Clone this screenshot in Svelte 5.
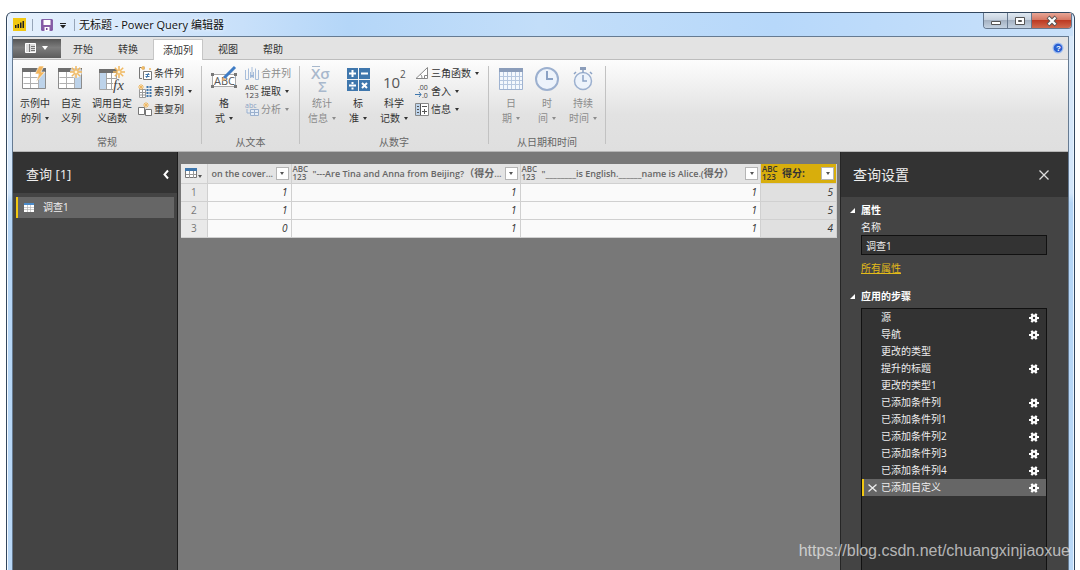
<!--
  QueryEditor — Power Query window: title bar, ribbon, query list,
  data preview and the query settings pane.
-->
<script lang="ts">
  type BigTool = { icon: string; lines: string[]; menu?: boolean; off?: boolean; wide?: boolean };
  type SmallTool = { icon: string; label: string; menu?: boolean; off?: boolean };
  type Group = { name: string; cls: string; big: BigTool[]; small: SmallTool[] };

  const tabs = ['开始', '转换', '添加列', '视图', '帮助'];
  let activeTab = $state('添加列');

  const groups: Group[] = [
    {
      name: '常规',
      cls: 'general',
      big: [
        { icon: 'example', lines: ['示例中', '的列'], menu: true },
        { icon: 'custom', lines: ['自定', '义列'] },
        { icon: 'invoke', lines: ['调用自定', '义函数'], wide: true },
      ],
      small: [
        { icon: 'conditional', label: '条件列' },
        { icon: 'index', label: '索引列', menu: true },
        { icon: 'duplicate', label: '重复列' },
      ],
    },
    {
      name: '从文本',
      cls: 'text',
      big: [{ icon: 'format', lines: ['格', '式'], menu: true }],
      small: [
        { icon: 'merge', label: '合并列', off: true },
        { icon: 'extract', label: '提取', menu: true },
        { icon: 'parse', label: '分析', menu: true, off: true },
      ],
    },
    {
      name: '从数字',
      cls: 'number',
      big: [
        { icon: 'stats', lines: ['统计', '信息'], menu: true, off: true },
        { icon: 'standard', lines: ['标', '准'], menu: true },
        { icon: 'science', lines: ['科学', '记数'], menu: true },
      ],
      small: [
        { icon: 'trig', label: '三角函数', menu: true },
        { icon: 'round', label: '舍入', menu: true },
        { icon: 'info', label: '信息', menu: true },
      ],
    },
    {
      name: '从日期和时间',
      cls: 'date',
      big: [
        { icon: 'date', lines: ['日', '期'], menu: true, off: true },
        { icon: 'time', lines: ['时', '间'], menu: true, off: true },
        { icon: 'duration', lines: ['持续', '时间'], menu: true, off: true },
      ],
      small: [],
    },
  ];

  // latin and CJK parts of a heading are set at different sizes
  const columns = [
    { latin: 'on the cover...', cjk: '', end: '', cls: 'c1', typed: false },
    { latin: '"---Are Tina and Anna from Beijing?', cjk: '（得分', end: '...', cls: 'c2', typed: true },
    { latin: '"________is English.______name is Alice.(', cjk: '得分）', end: '', cls: 'c3', typed: true },
    { latin: '', cjk: '得分:', end: '', cls: 'c4', typed: true },
  ];
  const rows = [
    [1, 1, 1, 5],
    [1, 1, 1, 5],
    [0, 1, 1, 4],
  ];

  let queryName = $state('调查1');
  const steps = [
    { name: '源', gear: true },
    { name: '导航', gear: true },
    { name: '更改的类型', gear: false },
    { name: '提升的标题', gear: true },
    { name: '更改的类型1', gear: false },
    { name: '已添加条件列', gear: true },
    { name: '已添加条件列1', gear: true },
    { name: '已添加条件列2', gear: true },
    { name: '已添加条件列3', gear: true },
    { name: '已添加条件列4', gear: true },
    { name: '已添加自定义', gear: true },
  ];
  let selected = $state(10);
</script>

{#snippet burst(x: number, y: number)}
  <g transform="translate({x} {y})" stroke="#f0b860" stroke-width="1.5">
    <path d="M0-6V6M-6 0H6M-4.2-4.2 4.2 4.2M4.2-4.2-4.2 4.2" />
    <circle r="2" fill="#fff3d8" stroke="#f0b860" stroke-width="1" />
  </g>
{/snippet}

{#snippet sheet(shade: number)}
  <path d="M1 3h23v20H1z" fill="#fff" />
  <path d="M{shade} 6h8v17h-8z" fill="#bdd3ea" />
  <path d="M1.5 11.500h15M1.500 17.500h15M8.500 6v17M16.500 6v17" stroke="#b0b0b0" fill="none" />
  <path d="M.5 2.500h23v20H.5z" stroke="#8c8c8c" fill="none" />
  <path d="M0 2h24v4H0z" fill="#6e6e6e" />
{/snippet}

{#snippet bigIcon(name: string)}
  <svg class="big-icon" viewBox="0 0 26 26" fill="none" aria-hidden="true">
    {#if name === 'example'}
      {@render sheet(16)}
      <path d="M17 0h5l-3 6h4l-9 10 3-8h-4z" fill="#f3b55c" stroke="#fff" stroke-width=".6" />
    {:else if name === 'custom'}
      {@render sheet(16)}
      <circle cx="18" cy="6" r="6" fill="#fff" fill-opacity=".7" />
      {@render burst(18, 6)}
    {:else if name === 'invoke'}
      <path d="M1 4h15v20H1z" fill="#fff" />
      <path d="M1 7h6v17H1z" fill="#bdd3ea" />
      <path d="M14 23.500H.5v-19h17V13M7.500 7v16M7 12.500h10M7 17.500h7M12.500 7v16" stroke="#a4a4a4" />
      <path d="M0 3h18v4H0z" fill="#6e6e6e" />
      {@render burst(20, 6)}
      <text x="14" y="24" class="fx">fx</text>
    {:else if name === 'format'}
      <path d="M1.500 8.500h23v12h-23z" fill="#fff" stroke="#aaa" />
      <text x="3" y="19" class="abc">ABC</text>
      <path d="M0 7h3v3H0zM23 7h3v3h-3zM0 19h3v3H0zM23 19h3v3h-3z" fill="#777" />
      <path d="M24 1 13 12" stroke="#3f7cc4" stroke-width="3" />
      <path d="m12 11 3 3-4 1z" fill="#eab676" />
    {:else if name === 'stats'}
      <path d="M3 .5h8" stroke="#a8b8cc" />
      <text x="2" y="13" class="sigma">Xσ</text>
      <text x="9" y="26" class="sigma">Σ</text>
    {:else if name === 'standard'}
      <path d="M2 2h11v11H2zM14 2h11v11H14zM2 14h11v11H2zM14 14h11v11H14z" fill="#3f77ad" />
      <path
        d="M4 7.500h7M7.500 4v7M16 7.500h7M4 19.500h7M17 17l5 5M22 17l-5 5"
        stroke="#fff"
        stroke-width="2"
      />
      <path d="M6.500 16h2v2h-2zM6.500 21.500h2v2h-2z" fill="#fff" />
    {:else if name === 'science'}
      <text x="2" y="22" class="ten">10</text>
      <text x="19" y="12" class="pow">2</text>
    {:else if name === 'date'}
      <path d="M1.500 3.500h23v20h-23z" fill="#f4f8fd" stroke="#9fb3d1" />
      <path d="M1 2h24v4H1z" fill="#8b9dba" />
      <path d="M5.500 6v17M9.500 6v17M13.500 6v17M17.500 6v17M21.500 6v17M2 10.500h22M2 14.500h22M2 18.500h22" stroke="#b7c8e0" />
    {:else if name === 'time'}
      <circle cx="13" cy="13" r="11" fill="#edf3fb" stroke="#9cb0cf" stroke-width="2" />
      <path d="M13 5v8h6" stroke="#8ba2c5" stroke-width="2" />
    {:else if name === 'duration'}
      <circle cx="13" cy="15" r="8.500" fill="#edf3fb" stroke="#9cb0cf" stroke-width="1.500" />
      <path d="M13 9v6h4M13 3v4M20 6l2 2M6 6 4 8" stroke="#8ba2c5" stroke-width="1.500" />
      <path d="M10 1h6v3h-6z" fill="#8b9dba" />
    {/if}
  </svg>
{/snippet}

{#snippet smallIcon(name: string)}
  <svg class="small-icon" viewBox="0 0 14 14" fill="none" aria-hidden="true">
    {#if name === 'conditional'}
      <path d="M4 1.500H1.500v11H4M6 .5v3" stroke="#777" />
      <path d="M5.500 5.500h8v8h-8z" fill="#fff" stroke="#777" />
      <path d="M7.500 8.500h4M7.500 10.500h4M10.500 7l-2 5" stroke="#3f77ad" />
      <path d="M5 0v4M3 2h4M11 3h2" stroke="#f0b860" stroke-width="1.500" />
    {:else if name === 'index'}
      <path d="M1.500 5.500h6v8h-6zM1 8.500h6M1 11h6M4.500 5v8" fill="#fff" stroke="#999" />
      <path d="M3 0v6M0 3h6M1 1l4 4M5 1 1 5" stroke="#f0b860" />
      <path d="M9.500 2v11M12.500 2v11" stroke="#3f77ad" stroke-width="2" stroke-dasharray="2 1" />
    {:else if name === 'duplicate'}
      <path d="M.5 5.500h6v7h-6zM7.500 7.500h6v6h-6z" fill="#fff" stroke="#777" />
      <path d="M8 0v6M5 3h6M6 1l4 4M10 1 6 5" stroke="#f0b860" />
    {:else if name === 'merge'}
      <path d="M.5 4v9.500h3V2.500M13.500 4v9.500h-3V2.500M5.500 6v6M8.500 6v6M7 1v9" stroke="#a8bedb" />
      <path d="m5 9 2 3 2-3" fill="#9ab4d6" />
    {:else if name === 'extract'}
      <text x="0" y="6" class="tiny">ABC</text>
      <text x="0" y="14" class="tiny num">123</text>
    {:else if name === 'parse'}
      <text x="0" y="6" class="tiny pale">abc</text>
      <path d="M5.500 7.500h8v6h-8zM5 10.500h8M9.500 7v6M2 7v4h3" fill="#e5edf7" stroke="#9ab0ce" />
    {:else if name === 'trig'}
      <path d="M12.500 1.500v11H1zM9.500 12V9.500h3" fill="#fff" stroke="#888" />
      <path d="M5 8c1.500 1 2 2.500 2 4" stroke="#888" />
    {:else if name === 'round'}
      <text x="3" y="6" class="tiny">.00</text>
      <text x="7" y="14" class="tiny">.0</text>
      <path d="M0 10.500h6M4 8l2 2.500L4 13" stroke="#3f77ad" />
    {:else if name === 'info'}
      <path d="M.5 1.500h13v12H.5z" fill="#fff" stroke="#888" />
      <path d="M1 2h4v11H1z" fill="#bdd3ea" />
      <path d="M5.500 2v11M2 4.500h2M2 7.500h2M2 10.500h2M7 4.500h5M7 9.500h5M9.500 7v5" stroke="#555" />
    {/if}
  </svg>
{/snippet}

{#snippet gearIcon()}
  <svg class="gear" viewBox="0 0 10 10" aria-hidden="true">
    <path d="M0 5h10M2.500.7l5 8.600M7.500.7l-5 8.600" stroke="#fff" stroke-width="2.200" />
    <circle cx="5" cy="5" r="2.300" fill="#333" stroke="#fff" stroke-width="2.200" />
  </svg>
{/snippet}

{#snippet typeMark()}
  <span class="type"><span>ABC</span><span>123</span></span>
{/snippet}

<div class="window">
  <header class="titlebar">
    <svg class="logo" viewBox="0 0 13 13" aria-hidden="true">
      <path d="M0 0h13v13H0z" fill="#f2c811" />
      <path d="M2 7h1.500v3H2zM4.500 6H6v4H4.500zM7 4.500h1.500V10H7zM9.500 3H11v7H9.500z" fill="#222" />
    </svg>
    <span class="bar"></span>
    <button class="quick" aria-label="保存">
      <svg viewBox="0 0 12 12" width="12" height="12">
        <path d="M.7.7h10.600v10.600H.7z" fill="#8a5fa8" stroke="#75499a" />
        <path d="M2.500 1h7v5h-7zM3.500 8h5v4h-5z" fill="#fff" />
        <path d="M5 9h1.500v2H5z" fill="#75499a" />
      </svg>
    </button>
    <button class="quick more" aria-label="自定义快速访问工具栏">
      <svg viewBox="0 0 6 6" width="6" height="6"><path d="M0 0h6v1H0zM0 2h6L3 5.500z" fill="#222" /></svg>
    </button>
    <span class="bar"></span>
    <h1>无标题 - Power Query 编辑器</h1>
    <div class="winbtns">
      <button aria-label="最小化">
        <svg viewBox="0 0 12 10" width="12" height="10"><path d="M1.500 5.500h9v3h-9z" fill="#fff" stroke="#555" /></svg>
      </button>
      <button aria-label="最大化">
        <svg viewBox="0 0 12 10" width="12" height="10">
          <path d="M1.500 1.500h9v7h-9z" fill="#fff" stroke="#555" />
          <path d="M4.500 4.500h3v1h-3z" fill="#aaa" stroke="#555" />
        </svg>
      </button>
      <button class="close" aria-label="关闭">
        <svg viewBox="0 0 12 10" width="12" height="10">
          <path d="m2 1 8 8M10 1 2 9" stroke="#555" stroke-width="4" />
          <path d="m2.500 1.500 7 7M9.500 1.500l-7 7" stroke="#fff" stroke-width="2.200" />
        </svg>
      </button>
    </div>
  </header>

  <div class="client">
    <nav class="tabs">
      <button class="file" aria-label="文件">
        <svg viewBox="0 0 24 10" width="24" height="10" aria-hidden="true">
          <path d="M.5.500h10v9H.5z" fill="#ddd" stroke="#fff" />
          <path d="M4.500 1v8M6 3.500h4M6 5.500h4M6 7.500h4" stroke="#777" />
          <path d="M17 3h6l-3 4z" fill="#fff" />
        </svg>
      </button>
      {#each tabs as tab}
        <button class="tab" class:active={tab === activeTab} onclick={() => (activeTab = tab)}>{tab}</button>
      {/each}
      <button class="help" aria-label="帮助">
        <svg viewBox="0 0 12 12" width="12" height="12">
          <circle cx="6" cy="6" r="5.500" fill="#9fbdf0" />
          <circle cx="6" cy="6" r="4.300" fill="#2a5fd0" />
          <text x="4" y="9" class="q">?</text>
        </svg>
      </button>
    </nav>

    <div class="ribbon">
      {#each groups as group}
        <section class="group {group.cls}">
          <div class="tools">
            {#each group.big as tool}
              <button class="big" class:wide={tool.wide} class:off={tool.off}>
                {@render bigIcon(tool.icon)}
                <span>{tool.lines[0]}</span>
                <span>{tool.lines[1]}{#if tool.menu}<i class="caret"></i>{/if}</span>
              </button>
            {/each}
            {#if group.small.length}
              <div class="stack">
                {#each group.small as tool}
                  <button class="small" class:off={tool.off}>
                    {@render smallIcon(tool.icon)}
                    <span>{tool.label}{#if tool.menu}<i class="caret"></i>{/if}</span>
                  </button>
                {/each}
              </div>
            {/if}
          </div>
          <h2>{group.name}</h2>
        </section>
      {/each}
    </div>

    <div class="body">
      <aside class="queries">
        <header>
          <h2>查询 [1]</h2>
          <button aria-label="折叠">
            <svg viewBox="0 0 6 9" width="6" height="9"><path d="M5 .5 1.500 4.500 5 8.500" fill="none" stroke="#fff" stroke-width="2" /></svg>
          </button>
        </header>
        <button class="query">
          <svg viewBox="0 0 10 9" width="10" height="9" aria-hidden="true">
            <path d="M0 0h10v9H0z" fill="#fff" />
            <path d="M0 0h10v2H0z" fill="#4a8ac9" />
            <path d="M3.500 2v7M6.500 2v7M0 4.500h10M0 6.500h10" stroke="#aaa" stroke-width=".6" />
          </svg>
          {queryName}
        </button>
      </aside>

      <main>
        <table>
          <thead>
            <tr>
              <th class="num">
                <button class="corner" aria-label="表">
                  <svg viewBox="0 0 17 11" width="17" height="11">
                    <path d="M.5.500h11v9H.5z" fill="#fff" stroke="#777" />
                    <path d="M0 0h12v3H0z" fill="#3f77ad" />
                    <path d="M4.500 3v7M8.500 3v7M1 6.500h10" stroke="#999" />
                    <path d="M13 7h4l-2 3z" fill="#555" />
                  </svg>
                </button>
              </th>
              {#each columns as col}
                <th class={col.cls}>
                  <div class="head">
                    {#if col.typed}{@render typeMark()}{/if}
                    <span class="title">{col.latin}<span class="cjk">{col.cjk}</span>{col.end}</span>
                    <button class="filter" aria-label="筛选"><i class="caret"></i></button>
                  </div>
                </th>
              {/each}
            </tr>
          </thead>
          <tbody>
            {#each rows as row, i}
              <tr>
                <th class="num">{i + 1}</th>
                {#each row as value, j}
                  <td class:picked={j === 3}>{value}</td>
                {/each}
              </tr>
            {/each}
          </tbody>
        </table>
      </main>

      <aside class="settings">
        <header>
          <h2>查询设置</h2>
          <button aria-label="关闭">
            <svg viewBox="0 0 10 10" width="10" height="10"><path d="m.5.500 9 9M9.500.500l-9 9" stroke="#ddd" stroke-width="1.300" /></svg>
          </button>
        </header>
        <div class="fields">
          <h3>属性</h3>
          <label for="query-name">名称</label>
          <input id="query-name" type="text" bind:value={queryName} />
          <a href="#all">所有属性</a>
          <h3>应用的步骤</h3>
          <ol>
            {#each steps as step, i}
              <li class:selected={i === selected}>
                <button class="remove" aria-label="删除">
                  {#if i === selected}
                    <svg viewBox="0 0 9 8" width="9" height="8"><path d="m.5.500 8 7M8.500.500l-8 7" stroke="#eee" stroke-width="1.300" /></svg>
                  {/if}
                </button>
                <button class="step" onclick={() => (selected = i)}>{step.name}</button>
                {#if step.gear}
                  <button class="edit" aria-label="编辑设置">{@render gearIcon()}</button>
                {/if}
              </li>
            {/each}
          </ol>
        </div>
      </aside>
    </div>
  </div>
  <span class="watermark">https://blog.csdn.net/chuangxinjiaoxue</span>
</div>

<style>
  :global(body) {
    background: #fff;
  }
  .window {
    position: relative;
    display: flex;
    flex-direction: column;
    box-sizing: border-box;
    height: calc(100vh - 12px);
    margin: 12px 5px 0 6px;
    padding: 0 5px;
    border: 1px solid #33475e;
    border-bottom: 0;
    border-radius: 6px 6px 0 0;
    overflow: hidden;
    background: linear-gradient(#d9e9fa, #d3e6fa 180px, #b4d5f6 190px, #b9d8f7);
    box-shadow: inset 1px 1px #f4faff, inset -1px 0 #e8f4ff;
    font: 10px/15px 'Open Sans', 'Noto Sans CJK SC', sans-serif;
    color: #333;
  }
  button {
    padding: 0;
    border: 0;
    background: none;
    color: inherit;
    font: inherit;
  }
  h1, h2, h3 {
    margin: 0;
    font: inherit;
  }
  svg {
    display: block;
    flex: none;
    overflow: visible;
  }
  .caret {
    display: inline-block;
    margin-left: 4px;
    border: 2px solid transparent;
    border-top: 3px solid currentColor;
    border-bottom: 0;
    vertical-align: 2px;
  }

  .titlebar {
    display: flex;
    flex: none;
    align-items: center;
    height: 23px;
    margin: 0 -4px;
    padding-left: 5px;
    background: linear-gradient(90deg, #e6f1fd, #c8e0fa 22%, #b4d6f8 32%, #c3def9 50%, #b7d8fa 72%, #c9e1fa);
  }
  .logo {
    width: 13px;
    height: 13px;
  }
  .bar {
    width: 1px;
    height: 12px;
    margin: 0 8px 0 6px;
    background: #96a5b8;
  }
  .quick.more {
    margin: 2px 4px 0 7px;
  }
  .more + .bar {
    margin: 0 4px;
  }
  h1 {
    color: #111;
    font-size: 11px;
    text-shadow: 0 0 4px #fff;
  }
  .winbtns {
    display: flex;
    align-self: flex-start;
    margin: 0 1px 0 auto;
    border: 1px solid #66788e;
    border-top: 0;
    border-radius: 0 0 4px 4px;
    overflow: hidden;
  }
  .winbtns button {
    display: grid;
    place-items: center;
    width: 24px;
    height: 15px;
    border-right: 1px solid #66788e;
    background: linear-gradient(#dfe8f1, #c5d0dd 48%, #a5b2c2 50%, #c4d2e1);
  }
  .winbtns .close {
    width: 39px;
    border-right: 0;
    background: linear-gradient(#e7a696, #d47561 48%, #bd3a22 50%, #d06a4e);
  }

  .client {
    display: flex;
    flex: 1;
    flex-direction: column;
    min-height: 0;
    border: 1px solid #667b92;
    border-bottom: 0;
  }
  .tabs {
    display: flex;
    flex: none;
    align-items: flex-end;
    gap: 5px;
    height: 22px;
    background: #e3e3e3;
    border-bottom: 1px solid #bdbdbd;
  }
  .file {
    display: grid;
    place-items: center;
    align-self: center;
    width: 48px;
    height: 19px;
    margin-right: -3px;
    background: linear-gradient(#555, #7d7d7d 45%, #5c5c5c);
  }
  .tab {
    height: 21px;
    padding: 0 10px;
    line-height: 20px;
  }
  .tab.active {
    margin-bottom: -1px;
    padding: 0 9px;
    border: 1px solid #c6c6c6;
    border-bottom: 0;
    background: #fff;
    line-height: 18px;
  }
  .help {
    align-self: center;
    margin: 0 4px 0 auto;
  }
  .q {
    fill: #fff;
    font: bold 8px 'Liberation Sans', sans-serif;
  }

  .ribbon {
    display: flex;
    flex: none;
    height: 87px;
    padding: 4px 0 0;
    background: linear-gradient(#fdfdfd, #e2e2e2 60%, #dfdfdf);
    border-bottom: 1px solid #b5b5b5;
  }
  .group {
    position: relative;
    display: flex;
    flex-direction: column;
    justify-content: space-between;
    box-sizing: border-box;
    height: 86px;
    padding: 0 4px;
    border-right: 1px solid transparent;
    border-image: linear-gradient(transparent 3%, #c2c2c2 3%, #c2c2c2 92%, transparent 92%) 1;
  }
  .general { width: 189px; }
  .text { width: 98px; }
  .number { width: 189px; }
  .date { width: 117px; }
  .tools {
    display: flex;
    align-items: flex-start;
  }
  .big {
    display: flex;
    flex-direction: column;
    align-items: center;
    width: 36px;
    padding-top: 2px;
    white-space: nowrap;
  }
  .big.wide {
    width: 46px;
  }
  .big-icon {
    width: 26px;
    height: 26px;
    margin-bottom: 4px;
  }
  .stack {
    display: flex;
    flex-direction: column;
    margin-left: 3px;
  }
  .small {
    display: flex;
    align-items: center;
    gap: 2px;
    height: 18px;
    white-space: nowrap;
  }
  .small-icon {
    width: 14px;
    height: 14px;
  }
  .off {
    color: #8c8c8c;
  }
  .group h2 {
    color: #666;
    text-align: center;
    line-height: 16px;
  }
  .fx {
    fill: #444;
    font: italic 15px 'Liberation Serif', serif;
  }
  .abc {
    fill: #555;
    font: 11px 'Open Sans', sans-serif;
  }
  .sigma {
    fill: #a8b8cc;
    font: 600 15px 'Open Sans', sans-serif;
  }
  .ten {
    fill: #555;
    font: 15px 'Open Sans', sans-serif;
  }
  .pow {
    fill: #555;
    font: 10px 'Open Sans', sans-serif;
  }
  .tiny {
    fill: #444;
    font: 7px 'Open Sans', sans-serif;
  }
  .tiny.num {
    font-size: 8px;
  }
  .tiny.pale {
    fill: #8ba2c5;
  }

  .body {
    display: flex;
    flex: 1;
    min-height: 0;
    background: #787878;
  }
  aside {
    display: flex;
    flex: none;
    flex-direction: column;
    background: #444;
    color: #eee;
  }
  aside header {
    display: flex;
    flex: none;
    align-items: center;
    justify-content: space-between;
    box-sizing: border-box;
    background: #333;
  }
  aside header h2 {
    font-size: 14px;
  }
  .queries {
    width: 164px;
    border-right: 1px solid #1c1c1c;
  }
  .queries header {
    height: 41px;
    padding: 3px 8px 0 13px;
  }
  .queries h2 {
    font-size: 13px;
  }
  .query {
    display: flex;
    align-items: center;
    gap: 9px;
    height: 21px;
    margin: 4px 3px;
    padding-left: 6px;
    border-left: 2px solid #f2c811;
    background: #666;
  }

  main {
    flex: 1;
    min-width: 0;
    padding: 12px 3px;
    overflow: hidden;
  }
  table {
    width: 100%;
    border-collapse: collapse;
    table-layout: fixed;
    background: #fafafa;
  }
  th, td {
    box-sizing: border-box;
    height: 18px;
    padding: 0 3px;
    border: 1px solid #d0d0d0;
    border-width: 0 1px 1px 0;
    line-height: 15px;
  }
  thead th {
    height: 19px;
    padding: 0 2px 0 1px;
    background: #e4e4e4;
    color: #666;
    font-weight: 600;
    font-size: 9px;
  }
  .num {
    width: 26px;
    background: #e9e9e9;
    color: #777;
    font-weight: normal;
    text-align: center;
  }
  .c1 { width: 84px; }
  .c2 { width: 229px; }
  .c4 { width: 76px; }
  thead .c4 {
    background: #d8ae0c;
    color: #333;
  }
  td {
    font-style: italic;
    text-align: right;
  }
  .picked {
    background: #e0e0e0;
  }
  .corner {
    margin: 0 auto;
    display: block;
  }
  .head {
    display: flex;
    align-items: center;
  }
  .type {
    display: flex;
    flex-direction: column;
    flex: none;
    width: 17px;
    font-weight: 600;
    font-size: 8px;
    line-height: 8px;
    text-align: left;
  }
  .title {
    flex: 1;
    min-width: 0;
    padding-left: 3px;
    text-align: left;
    white-space: nowrap;
  }
  .cjk {
    font-weight: bold;
    font-size: 10px;
  }
  .filter {
    display: grid;
    flex: none;
    place-items: center;
    width: 13px;
    height: 13px;
    border: 1px solid #b5b5b5;
    background: #fff;
    color: #555;
  }
  .filter .caret {
    margin: 0;
  }

  .settings {
    width: 227px;
    border-left: 1px solid #262626;
  }
  .settings header {
    height: 45px;
    padding: 0 19px 0 12px;
  }
  .fields {
    display: flex;
    flex: 1;
    flex-direction: column;
    align-items: stretch;
    min-height: 0;
    padding: 5px 21px 0 20px;
  }
  h3 {
    display: flex;
    align-items: center;
    margin-left: -11px;
    color: #fff;
    font-weight: bold;
    line-height: 17px;
  }
  h3::before {
    content: '';
    margin-right: 6px;
    border: solid transparent;
    border-width: 0 0 5px 5px;
    border-bottom-color: #fff;
  }
  label {
    line-height: 16px;
  }
  input {
    box-sizing: border-box;
    width: 100%;
    height: 20px;
    padding: 0 4px;
    border: 1px solid #111;
    border-radius: 0;
    background: #333;
    color: #eee;
    font: inherit;
  }
  a {
    align-self: flex-start;
    margin: 5px 0 12px;
    color: #e3bb19;
    line-height: 16px;
  }
  ol {
    flex: 1;
    min-height: 0;
    margin: 3px 0 0;
    padding: 0;
    border: 1px solid #111;
    border-bottom: 0;
    overflow: hidden;
    background: #333;
    list-style: none;
  }
  li {
    display: flex;
    align-items: center;
    height: 17px;
    padding-right: 7px;
    border-left: 2px solid transparent;
  }
  li.selected {
    border-left-color: #f2c811;
    background: #666;
  }
  .remove {
    display: grid;
    place-items: center;
    width: 17px;
    height: 17px;
  }
  .step {
    flex: 1;
    text-align: left;
  }
  .gear {
    width: 10px;
    height: 10px;
  }
  .watermark {
    position: absolute;
    right: 4px;
    bottom: 9px;
    color: rgba(255, 255, 255, 0.65);
    font: 16px/20px 'Liberation Sans', sans-serif;
  }
</style>
